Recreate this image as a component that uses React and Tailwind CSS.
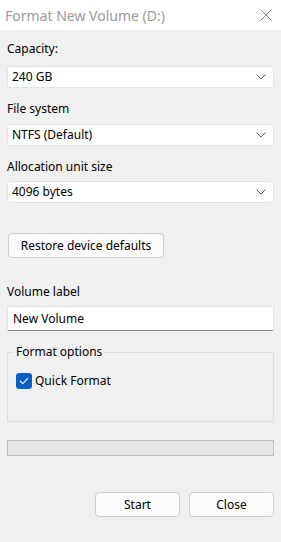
import React from 'react';

const font = { fontFamily: '"Noto Sans", "Open Sans", sans-serif' };

function Chevron() {
  return (
    <svg width="10" height="6" viewBox="0 0 10 6" className="shrink-0">
      <path d="M0.5 0.5 L5 5 L9.5 0.5" fill="none" stroke="#5a5a5a" strokeWidth="1" />
    </svg>
  );
}

function Select({ value }) {
  return (
    <div className="h-[22px] bg-white border border-[#e3e3e3] rounded-[3px] flex items-center justify-between pl-[4px] pr-[7px] text-[12px] text-black">
      <span>{value}</span>
      <Chevron />
    </div>
  );
}

function Label({ children, className = '' }) {
  return <div className={`text-[12px] leading-[16px] text-black ${className}`}>{children}</div>;
}

function Button({ children, className = '' }) {
  return (
    <div className={`h-[25px] bg-[#fbfbfb] border border-[#cfcfcf] rounded-[4px] flex items-center justify-center text-[12px] text-black ${className}`}>
      {children}
    </div>
  );
}

export default function App() {
  return (
    <div className="w-[281px] h-[542px] bg-[#f0f0f0] flex flex-col" style={font}>
      <div className="h-[30px] bg-white flex items-center justify-between pl-[5px] pr-[9px] shrink-0">
        <span className="text-[14px] text-[#9a9a9a]">Format New Volume (D:)</span>
        <svg width="12" height="12" viewBox="0 0 12 12">
          <path d="M0.5 0.5 L11.5 11.5 M11.5 0.5 L0.5 11.5" stroke="#8a8a8a" strokeWidth="1" fill="none" />
        </svg>
      </div>

      <div className="px-[7px] flex flex-col">
        <Label className="mt-[11px]">Capacity:</Label>
        <div className="mt-[9px]"><Select value="240 GB" /></div>

        <Label className="mt-[13px]">File system</Label>
        <div className="mt-[7px]"><Select value="NTFS (Default)" /></div>

        <Label className="mt-[13px]">Allocation unit size</Label>
        <div className="mt-[6px]"><Select value="4096 bytes" /></div>

        <Button className="mt-[30px] w-[156px] ml-[1px]">Restore device defaults</Button>

        <Label className="mt-[26px]">Volume label</Label>
        <div className="mt-[6px] h-[25px] bg-white border border-[#e3e3e3] border-b-[#8a8a8a] rounded-[2px] flex items-center pl-[5px] text-[12px] text-black">
          New Volume
        </div>

        <div className="mt-[21px] h-[70px] border border-[#dcdcdc] relative px-[8px]">
          <span className="absolute -top-[9px] left-[6px] bg-[#f0f0f0] px-[2px] text-[12px] leading-[16px] text-black">Format options</span>
          <div className="mt-[19px] flex items-center gap-[3px]">
            <div className="w-[16px] h-[16px] rounded-[3px] bg-[#0a5fc0] flex items-center justify-center">
              <svg width="10" height="8" viewBox="0 0 10 8">
                <path d="M1 4 L3.8 6.6 L9 1.2" fill="none" stroke="white" strokeWidth="1.1" />
              </svg>
            </div>
            <span className="text-[12px] text-black">Quick Format</span>
          </div>
        </div>

        <div className="mt-[18px] h-[16px] bg-[#e6e6e6] border border-[#bcbcbc]" />

        <div className="mt-[36px] flex justify-end gap-[9px]">
          <Button className="w-[85px]">Start</Button>
          <Button className="w-[85px]">Close</Button>
        </div>
      </div>
    </div>
  );
}
